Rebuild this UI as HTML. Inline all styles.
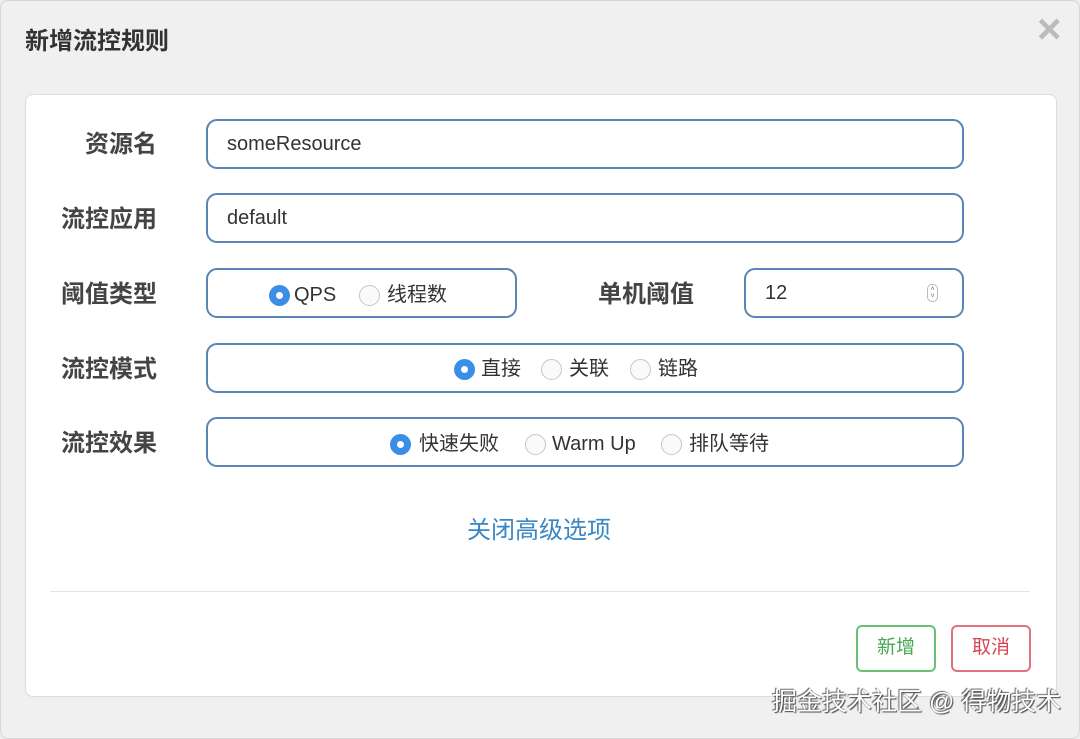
<!DOCTYPE html>
<html><head><meta charset="utf-8"><style>
*{margin:0;padding:0;box-sizing:border-box}
body{width:1080px;height:739px;background:#eeeeee;position:relative;overflow:hidden;font-family:"Liberation Sans","Noto Sans CJK SC",sans-serif;color:#333}
.a{position:absolute;white-space:nowrap}
.frame{position:absolute;left:0;top:0;width:1080px;height:739px;border:1px solid #d6d6d6;border-radius:8px;background:#f0f0f0}
.panel{position:absolute;left:25px;top:94px;width:1032px;height:603px;background:#fff;border:1px solid #dcdcdc;border-radius:8px}
.lbl{position:absolute;font-size:24px;font-weight:bold;color:#444;line-height:30px}
.box{position:absolute;border:2px solid #5a86b5;border-radius:11px;background:#fff}
.txt{position:absolute;font-size:20px;color:#333;line-height:26px}
.r{position:absolute;width:21px;height:21px;border-radius:50%;border:1px solid #c6c6c6;background:#fafafa}
.r.on{background:#3b8ee6;border:none}
.r.on::after{content:"";position:absolute;left:7px;top:7px;width:7px;height:7px;border-radius:50%;background:#fff}
.btn{position:absolute;height:47px;border:2px solid;border-radius:6px;font-size:19px;text-align:center;line-height:42px;background:#fff}
</style></head><body>
<div class="frame"></div>
<div class="a" style="left:25px;top:27px;font-size:24px;font-weight:bold;color:#333;line-height:30px">新增流控规则</div>
<div class="a" style="left:1037px;top:8px;font-size:42px;font-weight:bold;color:#bbb;line-height:42px">×</div>
<div class="panel"></div>

<div class="lbl" style="left:85px;top:130px">资源名</div>
<div class="box" style="left:206px;top:119px;width:758px;height:50px"></div>
<div class="txt" style="left:227px;top:131px">someResource</div>

<div class="lbl" style="left:61px;top:205px">流控应用</div>
<div class="box" style="left:206px;top:193px;width:758px;height:50px"></div>
<div class="txt" style="left:227px;top:205px">default</div>

<div class="lbl" style="left:61px;top:280px">阈值类型</div>
<div class="box" style="left:206px;top:268px;width:311px;height:50px"></div>
<div class="r on" style="left:269px;top:285px"></div>
<div class="txt" style="left:294px;top:282px">QPS</div>
<div class="r" style="left:359px;top:285px"></div>
<div class="txt" style="left:387px;top:282px">线程数</div>

<div class="lbl" style="left:598px;top:280px">单机阈值</div>
<div class="box" style="left:744px;top:268px;width:220px;height:50px"></div>
<div class="txt" style="left:765px;top:280px">12</div>
<div class="a" style="left:927px;top:284px;width:11px;height:18px;border:1px solid #bbb;border-radius:5px;font-size:7px;line-height:7px;text-align:center;color:#666;padding-top:1px">˄<br>˅</div>

<div class="lbl" style="left:61px;top:355px">流控模式</div>
<div class="box" style="left:206px;top:343px;width:758px;height:50px"></div>
<div class="r on" style="left:454px;top:359px"></div>
<div class="txt" style="left:481px;top:356px">直接</div>
<div class="r" style="left:541px;top:359px"></div>
<div class="txt" style="left:569px;top:356px">关联</div>
<div class="r" style="left:630px;top:359px"></div>
<div class="txt" style="left:658px;top:356px">链路</div>

<div class="lbl" style="left:61px;top:429px">流控效果</div>
<div class="box" style="left:206px;top:417px;width:758px;height:50px"></div>
<div class="r on" style="left:390px;top:434px"></div>
<div class="txt" style="left:419px;top:431px">快速失败</div>
<div class="r" style="left:525px;top:434px"></div>
<div class="txt" style="left:552px;top:431px">Warm Up</div>
<div class="r" style="left:661px;top:434px"></div>
<div class="txt" style="left:689px;top:431px">排队等待</div>

<div class="a" style="left:467px;top:516px;font-size:24px;color:#3a87c4;line-height:30px">关闭高级选项</div>
<div class="a" style="left:50px;top:591px;width:980px;height:1px;background:#e3e3e3"></div>

<div class="btn" style="left:856px;top:625px;width:80px;border-color:#6cbf76;color:#45a853">新增</div>
<div class="btn" style="left:951px;top:625px;width:80px;border-color:#e0727a;color:#d9434f">取消</div>

<div class="a" style="left:772px;top:687px;font-size:25px;color:#fff;line-height:30px;text-shadow:1px 1px 1px #444,-1px -1px 1px #666">掘金技术社区 @ 得物技术</div>
</body></html>
